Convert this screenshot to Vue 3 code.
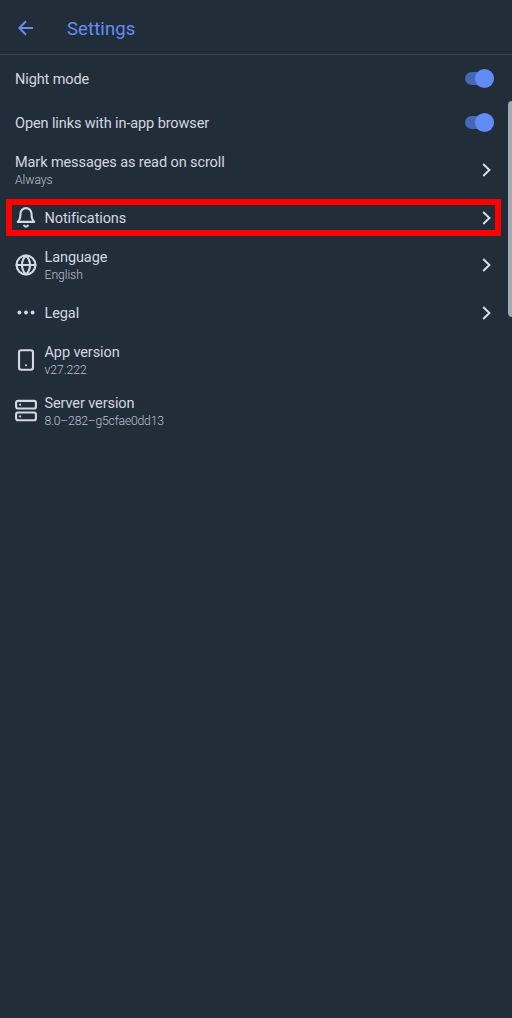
<script setup>
const rows = [
  { id: 'night', title: 'Night mode', toggle: true, height: 46 },
  { id: 'links', title: 'Open links with in-app browser', toggle: true, height: 43 },
  { id: 'read', title: 'Mark messages as read on scroll', sub: 'Always', arrow: true, height: 51 },
  { id: 'bell', title: 'Notifications', icon: true, arrow: true, height: 45, marked: true },
  { id: 'globe', title: 'Language', sub: 'English', icon: true, arrow: true, height: 50 },
  { id: 'dots', title: 'Legal', icon: true, arrow: true, height: 45 },
  { id: 'phone', title: 'App version', sub: 'v27.222', icon: true, height: 50 },
  { id: 'server', title: 'Server version', sub: '8.0–282–g5cfae0dd13', icon: true, height: 51 },
]
</script>

<template>
  <div class="screen">
    <header class="header">
      <svg class="back" viewBox="0 0 16 16"><path d="M15 8H1.5M8 1.3 1.3 8 8 14.7" /></svg>
      <h1>Settings</h1>
    </header>
    <main>
      <div v-for="row in rows" :key="row.id" class="row" :style="{ height: row.height + 'px' }">
        <svg v-if="row.icon" class="icon" viewBox="0 0 24 24">
          <g v-if="row.id === 'bell'">
            <path d="M18 8A6 6 0 0 0 6 8c0 7-3 9-3 9h18s-3-2-3-9" transform="translate(0 -0.8)" />
            <path d="M10 20.3q2 2.3 4 0" />
          </g>
          <g v-else-if="row.id === 'globe'">
            <circle cx="12" cy="12" r="10.3" />
            <path d="M1.7 12h20.6M12 1.7c3 3 4.4 6.3 4.4 10.3S15 19.3 12 22.3c-3-3-4.4-6.3-4.4-10.3S9 4.7 12 1.7z" />
          </g>
          <g v-else-if="row.id === 'dots'" class="solid">
            <circle cx="4.8" cy="11.5" r="2.1" /><circle cx="12" cy="11.5" r="2.1" /><circle cx="19.2" cy="11.5" r="2.1" />
          </g>
          <g v-else-if="row.id === 'phone'">
            <rect x="4.4" y="1.4" width="15.2" height="21.2" rx="2.4" />
            <path d="M12 17.8h.01" />
          </g>
          <g v-else transform="translate(0 -0.5)">
            <rect x="1.2" y="1.4" width="21.6" height="8.4" rx="2" />
            <rect x="1.2" y="14.2" width="21.6" height="8.4" rx="2" />
            <path d="M5.6 5.6h.01M5.6 18.4h.01" />
          </g>
        </svg>
        <div class="label">
          <div class="title">{{ row.title }}</div>
          <div v-if="row.sub" class="sub" :class="row.id">{{ row.sub }}</div>
        </div>
        <span v-if="row.toggle" class="toggle"><span class="knob"></span></span>
        <svg v-if="row.arrow" class="arrow" viewBox="0 0 9 14"><path d="M1.2 1 7.4 7l-6.2 6" /></svg>
        <div v-if="row.marked" class="marker"></div>
      </div>
    </main>
    <div class="scrollbar"></div>
  </div>
</template>

<style>
body { margin: 0; background: #222d3a; }
</style>

<style scoped>
.screen {
  position: relative;
  width: 512px;
  height: 1018px;
  overflow: hidden;
  background: #222d3a;
  color: #d2d8e0;
  font-family: Roboto, "Liberation Sans", sans-serif;
}
.header {
  display: flex;
  align-items: center;
  box-sizing: border-box;
  height: 55px;
  padding-left: 18px;
  border-bottom: 1px solid #36424e;
  color: #658df0;
}
.back { width: 16px; height: 16px; margin-top: 1px; fill: none; stroke: currentColor; stroke-width: 2; }
h1 { margin: 4px 0 0 33px; font-size: 18.5px; font-weight: 400; line-height: 24px; letter-spacing: 0.1px; }
.row {
  position: relative;
  display: flex;
  align-items: center;
  box-sizing: border-box;
  padding: 0 18px 0 15px;
}
.icon {
  width: 22px;
  height: 22px;
  margin-right: 7.5px;
  overflow: visible;
  fill: none;
  stroke: #d0d9e4;
  stroke-width: 2.3;
  stroke-linecap: round;
  stroke-linejoin: round;
}
.solid { fill: #d0d9e4; stroke: none; }
.label { flex: 1; padding-top: 3px; white-space: nowrap; }
.title { font-size: 14.5px; line-height: 18px; letter-spacing: -0.1px; }
.sub { font-size: 12.2px; font-weight: 300; line-height: 17px; letter-spacing: -0.05px; color: #b9c3cf; }
.sub.server { letter-spacing: -0.2px; }
.arrow { width: 9px; height: 14px; margin-right: 3.5px; fill: none; stroke: #d5dfe9; stroke-width: 2; }
.toggle {
  display: flex;
  justify-content: flex-end;
  align-items: center;
  width: 29px;
  height: 13px;
  border-radius: 7px;
  background: #4668b5;
}
.knob { width: 19px; height: 19px; margin: -3px 0; flex: none; border-radius: 50%; background: #618cf8; }
.marker {
  position: absolute;
  left: 6px;
  top: 4px;
  box-sizing: border-box;
  width: 495px;
  height: 37px;
  border: 6px solid #ff0000;
  border-radius: 1px;
}
.scrollbar {
  position: absolute;
  left: 508px;
  top: 101px;
  width: 8px;
  height: 216px;
  border-radius: 4px;
  background: #a4a8b0;
}
</style>
